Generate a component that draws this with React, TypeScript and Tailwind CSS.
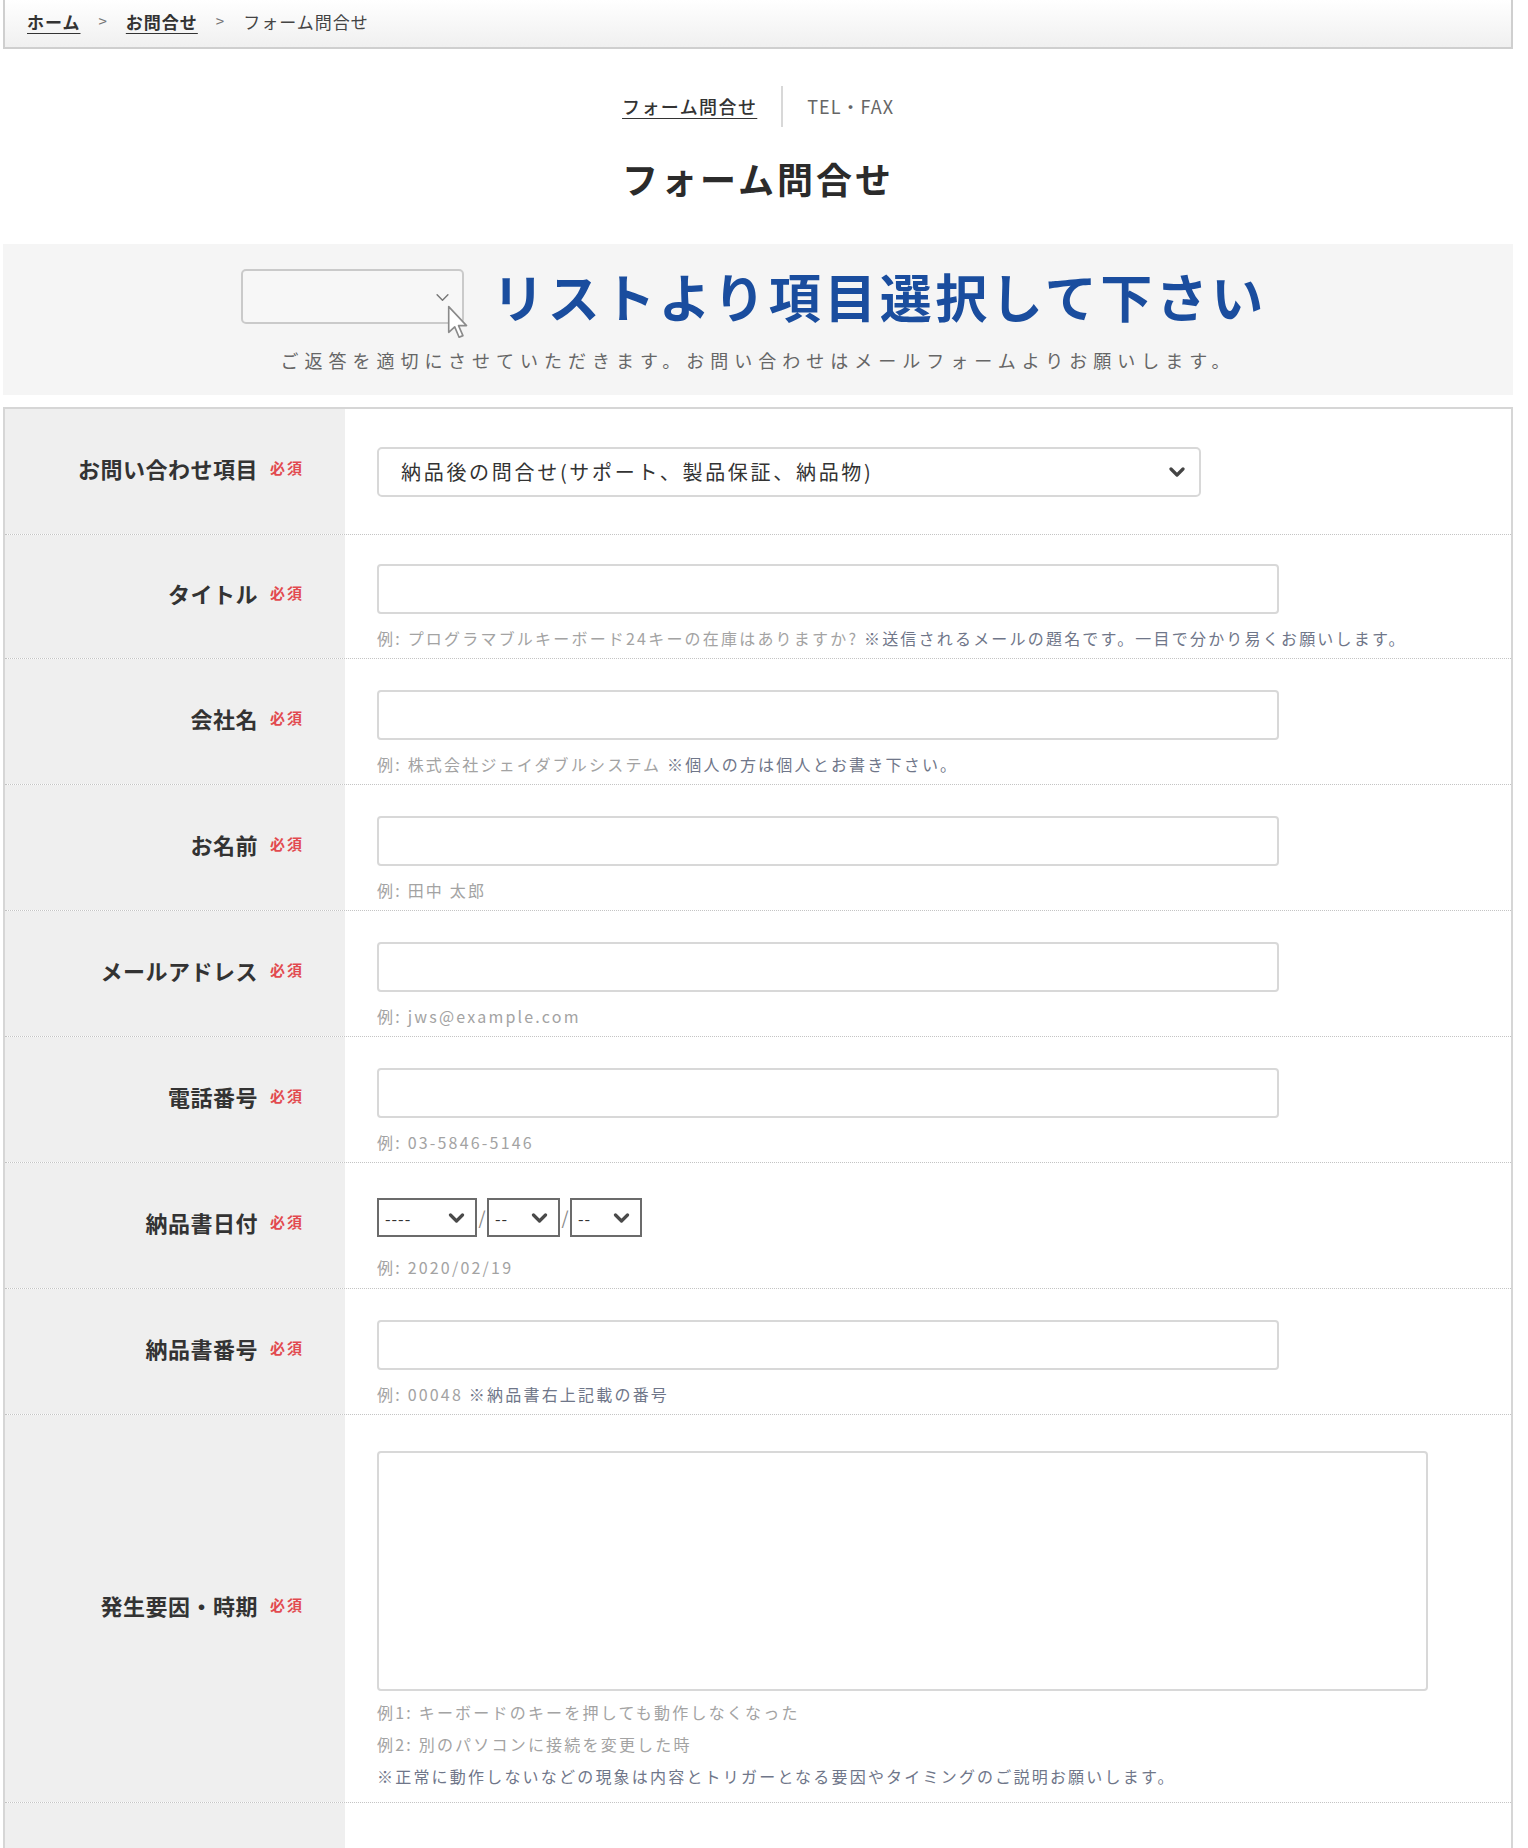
import React from "react";

const Req = () => (
  <span className="text-[15px] font-bold text-[#e24a4f] tracking-[2px]">必須</span>
);

const Chevron = ({ className = "", sw = 3, color = "#444" }: { className?: string; sw?: number; color?: string }) => (
  <svg viewBox="0 0 16 10" className={className} fill="none">
    <polyline points="2,2 8,8 14,2" stroke={color} strokeWidth={sw} strokeLinecap="round" strokeLinejoin="round" />
  </svg>
);

const Hint = ({ ex, note, className = "" }: { ex?: string; note?: string; className?: string }) => (
  <div className={`text-[16px] tracking-[2.2px] leading-[30px] whitespace-nowrap ${className}`}>
    {ex && <span className="text-[#a3a3a3]">{ex}</span>}
    {note && <span className="text-[#6f7689]">{note}</span>}
  </div>
);

const Row = ({
  label,
  h,
  children,
  center = false,
  pt = "pt-[31px]",
}: {
  label: string;
  h: string;
  children?: React.ReactNode;
  center?: boolean;
  pt?: string;
}) => (
  <div className={`flex ${h} border-b border-dotted border-[#c4c4c4]`}>
    <div className="w-[340px] shrink-0 bg-[#efefef] flex items-center justify-end pr-[41px] pb-[6px] gap-[12px]">
      <span className="text-[22px] font-bold tracking-[0.5px] text-[#333]">{label}</span>
      <Req />
    </div>
    <div className={`flex-1 pl-[32px] flex flex-col ${center ? "justify-center" : pt}`}>{children}</div>
  </div>
);

const TextInput = ({ w = "w-[902px]" }: { w?: string }) => (
  <div className={`${w} h-[50px] rounded-[4px] border-2 border-[#d8d8d8] bg-white`} />
);

const DateSel = ({ w, text }: { w: string; text: string }) => (
  <div className={`${w} h-[39px] border-2 border-[#6b6b6b] bg-white flex items-center justify-between pl-[6px] pr-[10px]`}>
    <span className="text-[16px] text-[#333] tracking-[1px] leading-none">{text}</span>
    <Chevron className="w-[17px] h-[10px]" sw={3.2} color="#4a4a4a" />
  </div>
);

export default function App() {
  return (
    <div className="w-[1528px] min-h-[1848px] bg-white text-[#333] font-['Noto_Sans_CJK_JP','Noto_Sans',sans-serif]">
      <div className="ml-[3px] w-[1510px]">
        {/* breadcrumb */}
        <div className="h-[49px] border-x-2 border-b-2 border-[#cfcfcf] bg-gradient-to-b from-white to-[#f0f0f0] flex items-center pl-[22px] pb-[4px] text-[17px] tracking-[1px] gap-[18px]">
          <a className="underline font-bold text-[#333] underline-offset-[4px]">ホーム</a>
          <span className="text-[#777] text-[15px]">&gt;</span>
          <a className="underline font-bold text-[#333] underline-offset-[4px]">お問合せ</a>
          <span className="text-[#777] text-[15px]">&gt;</span>
          <span className="text-[#444]">フォーム問合せ</span>
        </div>

        {/* tabs */}
        <div className="mt-[37px] h-[41px] flex justify-center items-center">
          <a className="text-[18px] tracking-[1.4px] underline underline-offset-[4px] text-[#333] font-medium">フォーム問合せ</a>
          <div className="w-[2px] h-[41px] bg-[#d8d8d8] mx-[24px]" />
          <span className="text-[18px] tracking-[1px] text-[#666]">TEL・FAX</span>
        </div>

        {/* title */}
        <h1 className="mt-[24px] text-center text-[36px] leading-[54px] font-bold tracking-[3px] text-[#2b2b2b]">
          フォーム問合せ
        </h1>

        {/* banner */}
        <div className="mt-[39px] h-[151px] bg-[#f5f5f5] flex flex-col items-center pt-[22px]">
          <div className="flex items-center gap-[28px] -ml-[8px]">
            <div className="relative w-[223px] h-[55px] rounded-[5px] border-2 border-[#cacaca] bg-[#f7f7f7]">
              <Chevron className="absolute left-[192px] top-[22px] w-[15px] h-[9px]" sw={1.6} color="#777" />
              <svg viewBox="0 0 20 32" className="absolute left-[204px] top-[34px] w-[22px] h-[35px]">
                <path d="M1.5 1.5 L1.5 25 L7 20 L11 29.5 L14.5 28 L10.5 18.8 L17.8 18.8 Z" fill="#fff" stroke="#8a8a8a" strokeWidth="1.5" strokeLinejoin="round" />
              </svg>
            </div>
            <div className="text-[52px] leading-[60px] font-bold tracking-[3.5px] text-[#1a4d9e]">リストより項目選択して下さい</div>
          </div>
          <p className="mt-[21px] text-[18px] leading-[27px] tracking-[6px] text-[#666]">
            ご返答を適切にさせていただきます。お問い合わせはメールフォームよりお願いします。
          </p>
        </div>

        {/* form table */}
        <div className="mt-[12px] border-x-2 border-t-2 border-[#d6d6d6]">
          <Row label="お問い合わせ項目" h="h-[126px]" center>
            <div className="w-[824px] h-[50px] rounded-[5px] border-2 border-[#d8d8d8] bg-white flex items-center justify-between pl-[22px] pr-[14px]">
              <span className="text-[20px] tracking-[2.7px] text-[#333]">納品後の問合せ(サポート、製品保証、納品物)</span>
              <Chevron className="w-[16px] h-[10px]" sw={3.2} color="#444" />
            </div>
          </Row>

          <Row label="タイトル" h="h-[124px]" pt="pt-[29px]">
            <TextInput />
            <Hint className="mt-[9px]" ex="例: プログラマブルキーボード24キーの在庫はありますか? " note="※送信されるメールの題名です。一目で分かり易くお願いします。" />
          </Row>

          <Row label="会社名" h="h-[126px]">
            <TextInput />
            <Hint className="mt-[9px]" ex="例: 株式会社ジェイダブルシステム " note="※個人の方は個人とお書き下さい。" />
          </Row>

          <Row label="お名前" h="h-[126px]">
            <TextInput />
            <Hint className="mt-[9px]" ex="例: 田中 太郎" />
          </Row>

          <Row label="メールアドレス" h="h-[126px]">
            <TextInput />
            <Hint className="mt-[9px]" ex="例: jws@example.com" />
          </Row>

          <Row label="電話番号" h="h-[126px]">
            <TextInput />
            <Hint className="mt-[9px]" ex="例: 03-5846-5146" />
          </Row>

          <Row label="納品書日付" h="h-[126px]" pt="pt-[35px]">
            <div className="flex items-center">
              <DateSel w="w-[100px]" text="----" />
              <span className="text-[18px] text-[#888] w-[10px] text-center">/</span>
              <DateSel w="w-[73px]" text="--" />
              <span className="text-[18px] text-[#888] w-[10px] text-center">/</span>
              <DateSel w="w-[72px]" text="--" />
            </div>
            <Hint className="mt-[15px]" ex="例: 2020/02/19" />
          </Row>

          <Row label="納品書番号" h="h-[126px]">
            <TextInput />
            <Hint className="mt-[9px]" ex="例: 00048 " note="※納品書右上記載の番号" />
          </Row>

          <Row label="発生要因・時期" h="h-[388px]" pt="pt-[36px]">
            <div className="w-[1051px] h-[240px] rounded-[4px] border-2 border-[#d8d8d8] bg-white" />
            <div className="mt-[5px] flex flex-col">
              <Hint className="leading-[32px]" ex="例1: キーボードのキーを押しても動作しなくなった" />
              <Hint className="leading-[32px]" ex="例2: 別のパソコンに接続を変更した時" />
              <Hint className="leading-[32px]" note="※正常に動作しないなどの現象は内容とトリガーとなる要因やタイミングのご説明お願いします。" />
            </div>
          </Row>

          <div className="flex h-[120px]">
            <div className="w-[340px] shrink-0 bg-[#efefef]" />
            <div className="flex-1" />
          </div>
        </div>
      </div>
    </div>
  );
}
